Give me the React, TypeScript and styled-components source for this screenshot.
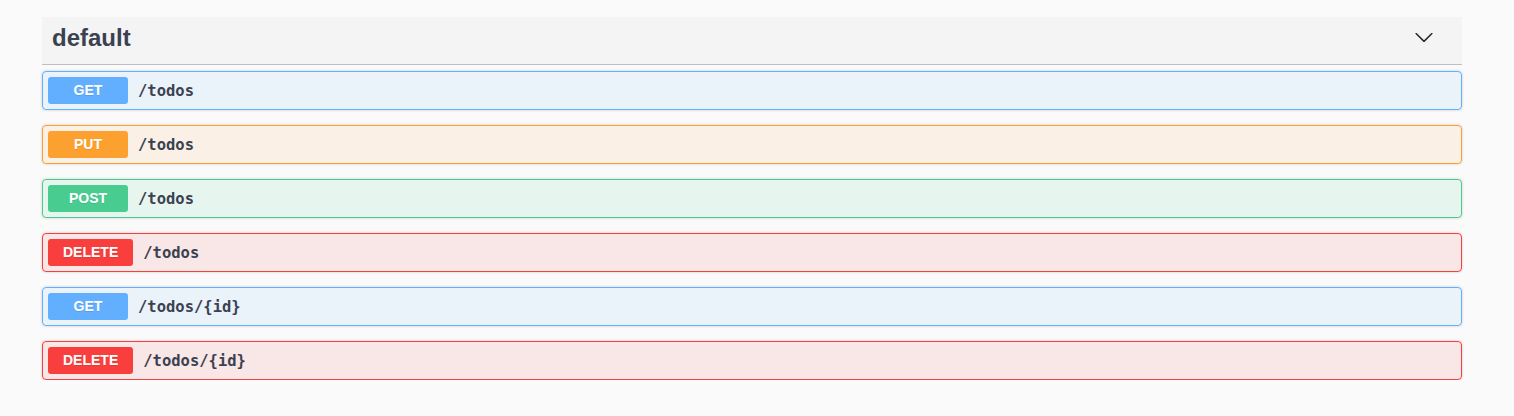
import React from "react";
import styled, { createGlobalStyle } from "styled-components";

const GlobalStyle = createGlobalStyle`
  html, body { margin: 0; padding: 0; background: #fafafa; }
  body { font-family: "Liberation Sans", Arial, sans-serif; }
`;

type Method = "GET" | "PUT" | "POST" | "DELETE";

const COLORS: Record<Method, { main: string; bg: string }> = {
  GET: { main: "#61affe", bg: "rgba(97,175,254,.1)" },
  PUT: { main: "#fca130", bg: "rgba(252,161,48,.1)" },
  POST: { main: "#49cc90", bg: "rgba(73,204,144,.1)" },
  DELETE: { main: "#f93e3e", bg: "rgba(249,62,62,.1)" },
};

const Wrapper = styled.div`
  width: 1420px;
  padding: 17px 0 0 42px;
`;

const TagHeader = styled.div`
  display: flex;
  align-items: flex-start;
  justify-content: space-between;
  height: 47px;
  padding: 0 28px 0 10px;
  background: #f4f4f4;
  border-bottom: 1px solid rgba(59, 65, 81, 0.3);
  margin-bottom: 6px;
`;

const TagTitle = styled.h4`
  margin: 7px 0 0;
  font-family: "Liberation Sans", Arial, sans-serif;
  font-size: 24px;
  line-height: 28px;
  font-weight: 700;
  color: #3b4151;
`;

const ExpandIcon = styled.svg`
  width: 20px;
  height: 20px;
  margin-top: 10px;
  fill: #222;
`;

const OpList = styled.div`
  display: flex;
  flex-direction: column;
  gap: 15px;
`;

const OpBlock = styled.div<{ $method: Method }>`
  display: flex;
  align-items: center;
  padding: 5px;
  border: 1px solid ${(p) => COLORS[p.$method].main};
  background: ${(p) => COLORS[p.$method].bg};
  border-radius: 4px;
  box-shadow: 0 0 3px rgba(0, 0, 0, 0.19);
`;

const MethodBadge = styled.span<{ $method: Method }>`
  box-sizing: border-box;
  min-width: 80px;
  height: 27px;
  padding: 0 15px 2px;
  display: flex;
  align-items: center;
  justify-content: center;
  background: ${(p) => COLORS[p.$method].main};
  border-radius: 3px;
  color: #fff;
  font-family: "Liberation Sans", Arial, sans-serif;
  font-size: 14px;
  font-weight: 700;
  text-shadow: 0 1px 0 rgba(0, 0, 0, 0.1);
`;

const Path = styled.span`
  padding: 0 10px;
  font-family: "DejaVu Sans Mono", "Liberation Mono", monospace;
  font-size: 15.5px;
  font-weight: 700;
  color: #3b4151;
`;

const ops: { method: Method; path: string }[] = [
  { method: "GET", path: "/todos" },
  { method: "PUT", path: "/todos" },
  { method: "POST", path: "/todos" },
  { method: "DELETE", path: "/todos" },
  { method: "GET", path: "/todos/{id}" },
  { method: "DELETE", path: "/todos/{id}" },
];

export default function App() {
  return (
    <>
      <GlobalStyle />
      <Wrapper>
        <TagHeader>
          <TagTitle>default</TagTitle>
          <ExpandIcon viewBox="0 0 20 20" aria-hidden="true">
            <path d="M17.418 6.109c.272-.268.709-.268.979 0s.271.701 0 .969l-7.908 7.83c-.27.268-.707.268-.979 0l-7.908-7.83c-.27-.268-.27-.701 0-.969.271-.268.709-.268.979 0L10 13.25l7.418-7.141z" />
          </ExpandIcon>
        </TagHeader>
        <OpList>
          {ops.map((op, i) => (
            <OpBlock key={i} $method={op.method}>
              <MethodBadge $method={op.method}>{op.method}</MethodBadge>
              <Path>{op.path}</Path>
            </OpBlock>
          ))}
        </OpList>
      </Wrapper>
    </>
  );
}
